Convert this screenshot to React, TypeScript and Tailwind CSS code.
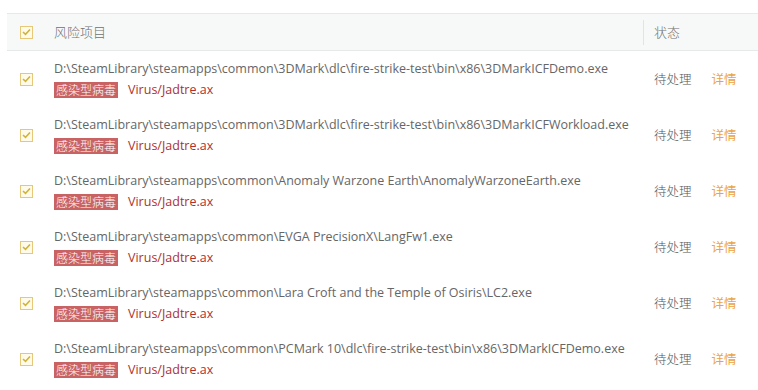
import React from "react";

const rows = [
  "D:\\SteamLibrary\\steamapps\\common\\3DMark\\dlc\\fire-strike-test\\bin\\x86\\3DMarkICFDemo.exe",
  "D:\\SteamLibrary\\steamapps\\common\\3DMark\\dlc\\fire-strike-test\\bin\\x86\\3DMarkICFWorkload.exe",
  "D:\\SteamLibrary\\steamapps\\common\\Anomaly Warzone Earth\\AnomalyWarzoneEarth.exe",
  "D:\\SteamLibrary\\steamapps\\common\\EVGA PrecisionX\\LangFw1.exe",
  "D:\\SteamLibrary\\steamapps\\common\\Lara Croft and the Temple of Osiris\\LC2.exe",
  "D:\\SteamLibrary\\steamapps\\common\\PCMark 10\\dlc\\fire-strike-test\\bin\\x86\\3DMarkICFDemo.exe",
];

function Check() {
  return (
    <div className="w-[13px] h-[13px] border border-[#e6c878] bg-[#fffbe8] flex items-center justify-center">
      <svg width="9" height="8" viewBox="0 0 9 8">
        <path d="M1 4 L3.5 6.3 L8 1.5" fill="none" stroke="#cdb43e" strokeWidth="1.6" />
      </svg>
    </div>
  );
}

export default function App() {
  const font = { fontFamily: '"Open Sans", "Noto Sans CJK SC", sans-serif' };
  const cjk = { fontFamily: '"Noto Sans CJK SC", sans-serif' };
  return (
    <div className="w-[758px] h-[390px] bg-white overflow-hidden pt-[13px]" style={font}>
      <div className="ml-[7px] h-[38px] bg-[#f7f9f9] border-y border-[#e6e9e9] flex items-center">
        <div className="w-[47px] pl-[13px]">
          <Check />
        </div>
        <div className="flex-1 text-[13px] text-[#707070] font-light" style={cjk}>风险项目</div>
        <div className="w-px h-[25px] bg-[#e2e4e4]" />
        <div className="w-[114px] pl-[10px] text-[13px] text-[#707070] font-light" style={cjk}>状态</div>
      </div>
      {rows.map((p, i) => (
        <div key={i} className="ml-[7px] h-[56px] flex items-center">
          <div className="w-[47px] pl-[13px]">
            <Check />
          </div>
          <div className="flex-1 flex flex-col gap-[5px]">
            <div className="text-[12.5px] leading-[16px] text-[#666] whitespace-nowrap">{p}</div>
            <div className="flex items-center">
              <span
                className="bg-[#c96363] text-white text-[12px] leading-[16px] px-[2px] h-[16px] font-light"
                style={cjk}
              >
                感染型病毒
              </span>
              <span className="ml-[10px] text-[12.5px] leading-[16px] text-[#b0302c]">Virus/Jadtre.ax</span>
            </div>
          </div>
          <div className="w-[115px] flex items-center text-[12.5px]" style={cjk}>
            <span className="ml-[11px] text-[#555] font-light">待处理</span>
            <span className="ml-[20px] text-[#eba43e]">详情</span>
          </div>
        </div>
      ))}
    </div>
  );
}
